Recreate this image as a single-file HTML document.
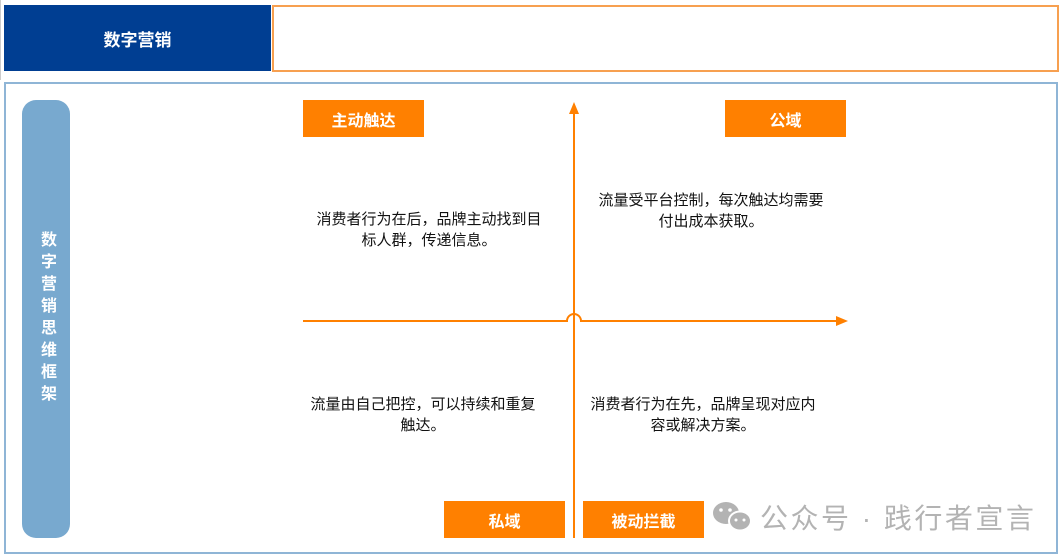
<!DOCTYPE html>
<html><head><meta charset="utf-8"><style>
body{margin:0;width:1064px;height:558px;background:#fff;position:relative;overflow:hidden;font-family:"Liberation Sans","Noto Sans CJK SC",sans-serif}
.a{position:absolute}
.ob{position:absolute;background:#ff8000;color:#fff;font-weight:bold;font-size:16px;display:flex;align-items:center;justify-content:center;width:121px;height:37px}
.t{position:absolute;font-size:15px;color:#111;text-align:center;line-height:21px;width:232px}
</style></head><body>
<div class="a" style="left:0;top:0;width:1px;height:80px;background:#ccc"></div>
<div class="a" style="left:4px;top:5px;width:267px;height:66px;background:#003e92;color:#fff;font-weight:bold;font-size:17px;display:flex;align-items:center;justify-content:center">数字营销</div>
<div class="a" style="left:272px;top:5px;width:783px;height:63px;border:2px solid #f7a050"></div>
<div class="a" style="left:4px;top:82px;width:1050px;height:468px;border:2px solid #8fb5d6"></div>
<div class="a" style="left:22px;top:100px;width:48px;height:438px;background:#78a9cf;border-radius:14px;color:#fff;font-weight:bold;font-size:16px;display:flex;align-items:center;justify-content:center;writing-mode:vertical-rl;letter-spacing:6px">数字营销思维框架</div>
<div class="ob" style="left:303px;top:100px">主动触达</div>
<div class="ob" style="left:725px;top:100px">公域</div>
<div class="ob" style="left:444px;top:501px">私域</div>
<div class="ob" style="left:583px;top:501px">被动拦截</div>
<svg class="a" style="left:0;top:0" width="1064" height="558">
<g stroke="#ff8000" stroke-width="2" fill="none">
<path d="M574 112V538"/>
<path d="M303 321H567a7 7 0 0 1 14 0H838"/>
</g>
<path d="M569 114L574 102L579 114Z" fill="#ff8000"/>
<path d="M836 316L848 321L836 326Z" fill="#ff8000"/>
<g fill="#b3b3b3"><ellipse cx="726" cy="513" rx="13" ry="11"/><ellipse cx="740" cy="521" rx="11" ry="9.5" stroke="#fff" stroke-width="2"/></g>
<g fill="#fff"><circle cx="721" cy="510" r="1.8"/><circle cx="730" cy="510" r="1.8"/><circle cx="736" cy="520" r="1.5"/><circle cx="744" cy="520" r="1.5"/></g>
</svg>
<div class="t" style="left:313px;top:209px">消费者行为在后，品牌主动找到目标人群，传递信息。</div>
<div class="t" style="left:595px;top:190px">流量受平台控制，每次触达均需要付出成本获取。</div>
<div class="t" style="left:307px;top:394px">流量由自己把控，可以持续和重复触达。</div>
<div class="t" style="left:587px;top:394px">消费者行为在先，品牌呈现对应内容或解决方案。</div>
<div class="a" style="left:760px;top:497px;font-size:28px;color:#b3b3b3;letter-spacing:2.5px;white-space:nowrap">公众号 · 践行者宣言</div>
</body></html>
